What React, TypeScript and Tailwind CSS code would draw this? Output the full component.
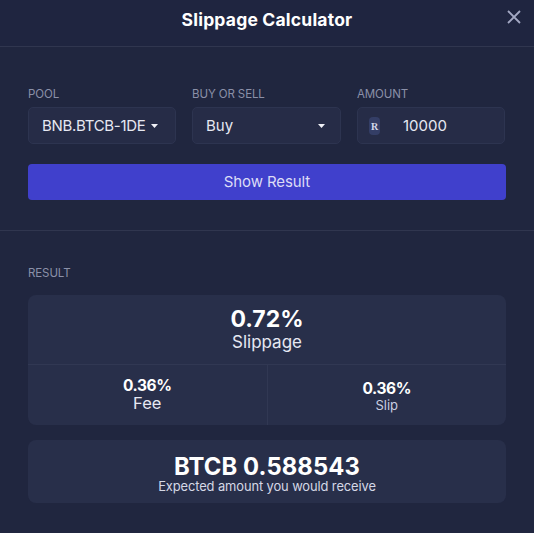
import type React from "react";

export default function App() {
  return (
    <div className="w-[534px] h-[533px] overflow-hidden bg-[#20263f] font-['Inter','Noto_Sans',sans-serif] text-white flex flex-col">
      <header className="relative h-[47px] shrink-0 border-b border-[#30364f] flex items-center justify-center bg-[#1f2540]">
        <h1 className="text-[17.5px] leading-[40px] font-bold text-white tracking-[0.2px] -mt-[7px]">Slippage Calculator</h1>
        <svg className="absolute left-[507px] top-[10px]" width="14" height="14" viewBox="0 0 14 14" fill="none">
          <path d="M1 1L13 13M13 1L1 13" stroke="#a3a8c3" strokeWidth="1.8" />
        </svg>
      </header>
      <section className="h-[184px] shrink-0 border-b border-[#30364f] px-[28px] pt-[39px]">
        <div className="flex gap-[16px]">
          <Field label="POOL" width="w-[148px]">
            <div className="flex items-center h-full pl-[13px] pt-[1px]">
              <span className="text-[15px] text-[#e6e8f2] tracking-[-0.3px]">BNB.BTCB-1DE</span>
              <Caret className="ml-[6px]" />
            </div>
          </Field>
          <Field label="BUY OR SELL" width="w-[149px]">
            <div className="flex items-center justify-between h-full pl-[13px] pr-[15px] pt-[1px]">
              <span className="text-[15px] text-[#e6e8f2]">Buy</span>
              <Caret />
            </div>
          </Field>
          <Field label="AMOUNT" width="w-[148px]">
            <div className="flex items-center h-full pl-[11px] pt-[1px]">
              <span className="w-[11px] h-[18px] rounded-[4px] bg-[#343e66] flex items-center justify-center text-[10px] font-bold text-[#d5d9ec] font-['Liberation_Serif',serif]">R</span>
              <span className="ml-[23px] text-[15px] text-[#e6e8f2]">10000</span>
            </div>
          </Field>
        </div>
        <button className="mt-[20px] w-[478px] h-[36px] rounded-[4px] bg-[#4040cc] text-[15px] text-[#dcdcf6] tracking-[-0.1px]">Show Result</button>
      </section>
      <section className="px-[28px] pt-[34px]">
        <div className="h-[14px] text-[11.5px] leading-[16px] text-[#8b90a8] tracking-[-0.1px]">RESULT</div>
        <div className="mt-[16px] w-[478px] h-[130px] rounded-[8px] bg-[#282f4a] flex flex-col">
          <div className="h-[70px] border-b border-[#313853] flex flex-col items-center pt-[11px]">
            <div className="text-[23px] leading-[27px] font-bold">0.72%</div>
            <div className="text-[17px] leading-[19px] text-[#e6e8f2]">Slippage</div>
          </div>
          <div className="flex flex-1">
            <div className="flex-1 border-r border-[#313853] flex flex-col items-center pt-[11px]">
              <div className="text-[15.5px] leading-[19px] font-bold tracking-[-0.4px]">0.36%</div>
              <div className="text-[16.5px] leading-[16px] text-[#e6e8f2]">Fee</div>
            </div>
            <div className="flex-1 flex flex-col items-center pt-[14px]">
              <div className="text-[15.5px] leading-[19px] font-bold tracking-[-0.4px]">0.36%</div>
              <div className="text-[13px] leading-[14px] text-[#c9cde0]">Slip</div>
            </div>
          </div>
        </div>
        <div className="mt-[15px] w-[478px] h-[63px] rounded-[8px] bg-[#282f4a] flex flex-col items-center pt-[14px]">
          <div className="text-[23.8px] leading-[25px] font-bold tracking-[0.1px]">BTCB 0.588543</div>
          <div className="mt-[1px] text-[12.9px] leading-[14px] text-[#d5d8e6] tracking-[-0.1px]">Expected amount you would receive</div>
        </div>
      </section>
    </div>
  );
}

function Field({ label, width, children }: { label: string; width: string; children: React.ReactNode }) {
  return (
    <div className={width}>
      <div className="h-[14px] text-[11.5px] leading-[16px] text-[#8b90a8] tracking-[-0.1px] mb-[7px]">{label}</div>
      <div className="h-[37px] rounded-[5px] bg-[#262c47] border border-[#2d3450]">{children}</div>
    </div>
  );
}

function Caret({ className = "" }: { className?: string }) {
  return (
    <svg className={className} width="7" height="4" viewBox="0 0 7 4">
      <path d="M0 0H7L3.5 4Z" fill="#f0f1f7" />
    </svg>
  );
}
